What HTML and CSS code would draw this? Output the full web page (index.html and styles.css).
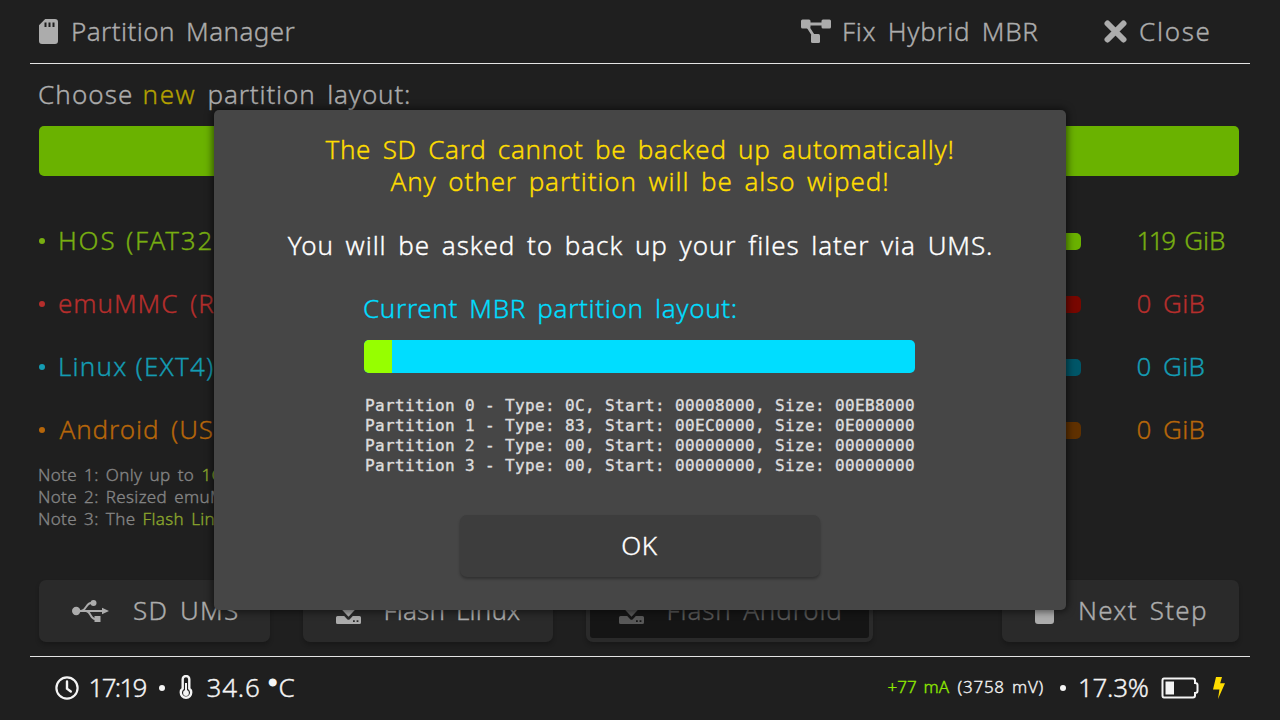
FILE: index.html
```html
<!DOCTYPE html>
<html lang="en">
<head>
<meta charset="utf-8">
<title>Partition Manager</title>
<link rel="stylesheet" href="styles.css">
</head>
<body>
<svg class="defs" width="0" height="0">
  <symbol id="sd" viewBox="0 0 19 25"><path fill-rule="evenodd" d="M6.200 0H16a3 3 0 0 1 3 3v19a3 3 0 0 1-3 3H3a3 3 0 0 1-3-3V6.200zM5.500 3.500v4.500h2v-4.500zM9.500 3.500v4.500h2v-4.500zM13.500 3.500v4.500h2v-4.500z"/></symbol>
  <symbol id="flash" viewBox="0 0 25 25"><path d="M9.500 0h6v9h5.200L12.500 17.800 4.300 9h5.200z"/><path fill-rule="evenodd" d="M1.500 17h6.700l3 3.200q1.300 1.200 2.600 0l3-3.200h6.700q1.500 0 1.500 1.500v5q0 1.500-1.500 1.500h-22Q0 25 0 23.500v-5Q0 17 1.500 17zM17 21.200v1.800h1.800v-1.800zM20.600 21.200v1.800h1.800v-1.800z"/></symbol>
</svg>
<div class="screen">
  <header class="top">
    <svg class="ic-sd"><use href="#sd"/></svg>
    <span class="title">Partition Manager</span>
    <div class="act fix">
      <svg width="30" height="25" viewBox="0 0 30 25"><path d="M5 5h20M5 5l9 14" stroke="currentColor" stroke-width="2.800" fill="none"/><rect x="0" y="0.500" width="9.500" height="9" rx="1.500"/><rect x="20.500" y="0.500" width="9.500" height="9" rx="1.500"/><rect x="10" y="15" width="9" height="9" rx="1.500"/></svg>
      <span>Fix Hybrid MBR</span>
    </div>
    <div class="act close">
      <svg width="23" height="23" viewBox="0 0 23 23"><path d="M3.500 3.500l16 16M19.500 3.500l-16 16" stroke="currentColor" stroke-width="6" stroke-linecap="round"/></svg>
      <span>Close</span>
    </div>
  </header>
  <main>
    <div class="choose"><span class="w1">Choose</span><span class="w2">new</span><span class="w3">partition layout:</span></div>
    <div class="layout-bar"></div>
    <div class="rows">
      <div class="row green"><i></i><span class="label hos">HOS (FAT32):</span><b></b><span class="size"><span class="ones">119</span> GiB</span></div>
      <div class="row red"><i></i><span class="label emu">emuMMC (RAW):</span><b></b><span class="size">0 GiB</span></div>
      <div class="row cyan"><i></i><span class="label lin">Linux (EXT4):</span><b></b><span class="size">0 GiB</span></div>
      <div class="row orange"><i></i><span class="label and">Android (USER):</span><b></b><span class="size">0 GiB</span></div>
    </div>
    <div class="notes">
      <p>Note 1: Only up to <em>1GB</em></p>
      <p>Note 2: Resized emuMMC</p>
      <p>Note 3: The <em>Flash Linux</em></p>
    </div>
    <div class="buttons">
      <div class="btn ums"><svg width="38" height="24" viewBox="0 0 38 24"><path d="M4 12h28M9 12c5 0 5-8 10-8h3M14 12c5 0 4 8 9 8h3" fill="none" stroke="currentColor" stroke-width="1.800"/><circle cx="4.200" cy="12" r="4.200"/><circle cx="21.500" cy="4" r="3"/><rect x="22.500" y="17" width="6" height="6"/><path d="M30 8.700L37 12l-7 3.300z"/></svg><span>SD UMS</span></div>
      <div class="btn linux"><svg class="ic-flash"><use href="#flash"/></svg><span>Flash Linux</span></div>
      <div class="btn android"><svg class="ic-flash"><use href="#flash"/></svg><span>Flash Android</span></div>
      <div class="btn next"><svg class="ic-sd"><use href="#sd"/></svg><span>Next Step</span></div>
    </div>
  </main>
  <footer class="status">
    <div class="left">
      <svg class="clock" viewBox="0 0 24 24"><circle cx="12" cy="12" r="10.600" fill="none" stroke="currentColor" stroke-width="2.200"/><path d="M12 5.500v7.200l3.800 2.800" fill="none" stroke="currentColor" stroke-width="2.400" stroke-linecap="round"/></svg>
      <span class="time">17:19</span>
      <i class="dot"></i>
      <svg class="thermo" viewBox="0 0 14 25"><path d="M3.700 13.500V4.300a3.300 3.300 0 0 1 6.600 0v9.200a5.200 5.200 0 1 1-6.600 0z" fill="none" stroke="currentColor" stroke-width="2.400"/><circle cx="7" cy="18" r="2.900"/><path d="M7 8v9" stroke="currentColor" stroke-width="2"/></svg>
      <span class="temp">34.6</span>
      <span class="unit"><span class="deg">°</span>C</span>
    </div>
    <div class="right">
      <span class="amp">+77 mA</span>
      <span class="volt">(3758 mV)</span>
      <i class="dot"></i>
      <span class="pct">17.3%</span>
      <svg class="batt" viewBox="0 0 38 22"><path d="M3 1.500h29q2 0 2 2V6q2.500 0 2.500 2v6q0 2-2.500 2v2.500q0 2-2 2H3q-1.500 0-1.500-2v-15q0-2 1.500-2z" fill="none" stroke="currentColor" stroke-width="2"/><rect x="4.500" y="4.500" width="8.500" height="13"/></svg>
      <svg class="bolt" viewBox="0 0 12 22"><path d="M3 0h6L7.200 6.300H12L5 22l1.400-9.500H0z"/></svg>
    </div>
  </footer>
  <section class="dialog">
    <p class="warn l1">The SD Card cannot be backed up automatically!</p>
    <p class="warn l2">Any other partition will be also wiped!</p>
    <p class="info">You will be asked to back up your files later via UMS.</p>
    <div class="mbr">
      <p class="mbr-title">Current MBR partition layout:</p>
      <div class="mbr-bar"><b></b></div>
      <pre>Partition 0 - Type: 0C, Start: 00008000, Size: 00EB8000
Partition 1 - Type: 83, Start: 00EC0000, Size: 0E000000
Partition 2 - Type: 00, Start: 00000000, Size: 00000000
Partition 3 - Type: 00, Start: 00000000, Size: 00000000</pre>
    </div>
    <div class="ok">OK</div>
  </section>
</div>
</body>
</html>
```
FILE: styles.css
```css
* { box-sizing: border-box; }
body { margin: 0; background: #1f1f1f; }
p, pre { margin: 0; }
svg { fill: currentColor; flex: none; display: block; }
.defs { position: absolute; }
.screen {
  position: relative; width: 1280px; height: 720px; overflow: hidden;
  display: flex; flex-direction: column;
  background: #1f1f1f; color: #acacac;
  font: 300 26px/32px "Noto Sans", sans-serif;
  word-spacing: 4px; white-space: nowrap;
  -webkit-text-stroke: .35px currentColor;
}
.ic-sd { width: 19px; height: 25px; }
.ic-flash { width: 25px; height: 25px; }

.top {
  height: 64px; margin: 0 30px; padding: 0 0 1px 9px;
  border-bottom: 1px solid #e4e4e4;
  display: flex; align-items: center;
}
.title { width: 729.500px; margin-left: 13px; letter-spacing: .42px; }
.act { display: flex; align-items: center; }
.fix { width: 303.500px; letter-spacing: .68px; }
.fix span { margin-left: 11.500px; }
.close { letter-spacing: 1.700px; }
.close span { margin-left: 12px; }

main { height: 592px; padding: 14px 41px 0 38px; }
.choose { display: flex; }
.w1 { width: 104.500px; letter-spacing: 1.100px; }
.w2 { width: 65px; letter-spacing: 1.800px; color: #b3a000; }
.w3 { letter-spacing: .85px; }
.layout-bar { height: 50px; margin: 16px 0 0 1px; border-radius: 5px; background: #6ab200; }

.rows { padding-top: 32.500px; }
.row { height: 63px; display: flex; align-items: center; }
.row i { width: 6px; height: 6px; margin: 2px 13px 0 1px; border-radius: 50%; background: currentColor; flex: none; }
.label { width: 303px; flex: none; }
.row b { width: 720px; height: 17px; margin: 3px 55.500px 0 0; border-radius: 5px; flex: none; }
.size { letter-spacing: .4px; }
.ones { letter-spacing: -2.500px; }
.green .size { letter-spacing: -.1px; }
.hos { letter-spacing: 1.800px; word-spacing: 1px; }
.emu { letter-spacing: .95px; }
.lin { letter-spacing: 1.200px; word-spacing: 0; }
.and { letter-spacing: .9px; padding-left: 1.500px; }
.green { color: #78ae11; }
.green b { background: #6ab200; }
.red { color: #b52e2c; }
.red b { background: #780700; }
.cyan { color: #149cb3; }
.cyan b { background: #005668; }
.orange { color: #b6660a; }
.orange b { background: #603100; }

.notes { margin-top: 3px; font-size: 17px; line-height: 22px; letter-spacing: .32px; word-spacing: 2.500px; color: #858585; }
.notes em { font-style: normal; color: #8ba62d; }

.buttons { display: flex; margin: 50px 0 0 1px; }
.btn {
  height: 62px; padding-bottom: 1px; border-radius: 7px; background: #2a2a2a;
  box-shadow: 0 3px 4px rgba(0,0,0,.22);
  display: flex; align-items: center;
}
.btn .ic-flash, .btn .ic-sd { margin-top: 2px; }
.ums { width: 231px; padding-left: 33px; letter-spacing: 1.200px; }
.ums svg { margin-top: 1px; }
.ums span { margin-left: 23px; }
.linux { width: 250px; margin-left: 33px; padding-left: 33px; letter-spacing: .15px; }
.linux span { margin-left: 22.500px; }
.android { width: 287px; margin-left: 33px; padding-left: 29px; border: 4px solid #2a2a2a; background: #151515; color: #585858; letter-spacing: .85px; }
.android span { margin-left: 22.500px; }
.next { width: 237px; margin-left: 129px; padding-left: 33px; letter-spacing: 1.250px; }
.next span { margin-left: 24px; }

.status {
  height: 64px; margin: 0 30px; padding: 0 0 3px 24.500px;
  border-top: 1px solid #e4e4e4; color: #f4f4f4;
  display: flex; align-items: center; justify-content: space-between;
}
.left, .right { display: flex; align-items: center; }
.dot { width: 6px; height: 6px; margin-top: 2px; border-radius: 50%; background: currentColor; }
.clock { width: 24px; height: 24px; margin-top: 1px; }
.time { width: 70px; margin-left: 10px; letter-spacing: -1.700px; }
.thermo { width: 14px; height: 25px; margin: 1px 0 0 14px; }
.temp { width: 62px; margin-left: 14px; letter-spacing: .8px; }
.deg { display: inline-block; width: 10px; text-indent: 1px; font-size: 15px; line-height: 15px; vertical-align: 6px; -webkit-text-stroke: 3.400px currentColor; }
.right { padding-right: 25px; }
.amp, .volt { font-size: 17px; word-spacing: 2px; }
.amp { width: 70px; letter-spacing: .1px; color: #8ee800; }
.volt { width: 102px; letter-spacing: .75px; }
.pct { width: 83px; margin-left: 12.500px; letter-spacing: -.3px; }
.batt { width: 38px; height: 22px; margin-top: 1px; }
.bolt { width: 12px; height: 22px; margin: 1px 0 0 14px; color: #ffdd00; }

.dialog {
  position: absolute; left: 214px; top: 110px; width: 852px; height: 500px;
  padding-top: 23px; border-radius: 5px; background: #464646; color: #fff;
  box-shadow: 0 0 7px 2px rgba(0,0,0,.5);
  display: flex; flex-direction: column; align-items: center;
}
.warn { color: #ffdd00; }
.l1 { letter-spacing: .7px; }
.l2 { letter-spacing: .88px; }
.info { margin-top: 32px; padding-left: 1px; letter-spacing: .93px; }
.mbr { width: 551px; margin: 30.500px 1px 0 0; }
.mbr-title { margin-left: -1px; letter-spacing: .65px; color: #00ddff; }
.mbr-bar { height: 33px; margin-top: 16px; border-radius: 5px; background: #00ddff; overflow: hidden; }
.mbr-bar b { display: block; width: 28px; height: 33px; background: #96ff00; }
.mbr pre { margin: 23px 0 0 1px; font: 16px/20px "DejaVu Sans Mono", monospace; letter-spacing: .367px; word-spacing: 0; color: #dcdcdc; -webkit-text-stroke: .4px currentColor; }
.ok {
  width: 360px; height: 62px; margin-top: 39px; padding: 0 1px 1px 0; border-radius: 7px;
  background: #3d3d3d; box-shadow: 0 2px 3px rgba(0,0,0,.3);
  display: flex; align-items: center; justify-content: center; letter-spacing: .6px;
}
```
